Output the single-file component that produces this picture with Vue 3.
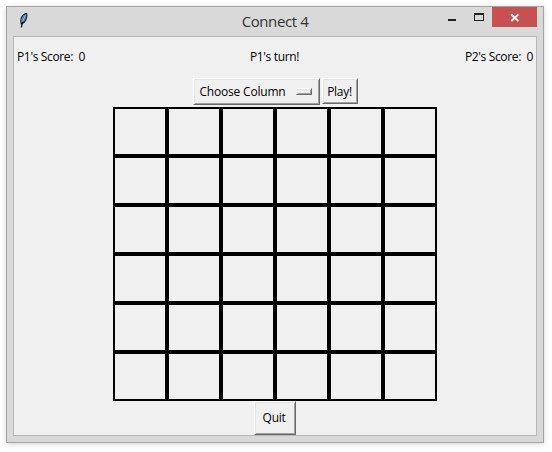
<script setup>
import { ref } from 'vue'

const rows = 6
const columns = 6
const scores = ref({ p1: 0, p2: 0 })
const turn = ref('P1')
const cells = Array.from({ length: rows * columns }, (_, i) => i)
</script>

<template>
  <main class="desktop">
    <section class="window">
      <header class="titlebar">
        <svg class="feather" width="10" height="17" viewBox="0 0 10 17">
          <path d="M2 12.5C.6 9 1.2 4.5 4.2 2.2 5.8 1 7.5.6 8.2 1.2 9 3.8 8 8.4 5.8 10.6 4.8 11.8 3.6 12.4 2 12.5Z" fill="#1c222c" />
          <path d="M2.2 10.5C2 7.5 3 4.5 5 3L4.6 7 2.8 11Z" fill="#6f8fa8" />
          <path d="M5.4 3 7.4 2C7.7 5 6.6 8.2 4 10.6Z" fill="#4380d3" />
          <path d="M6.5 2.8 3.6 9.5" stroke="#a9cdf0" stroke-width=".8" />
          <path d="M3.3 10 2.4 15.5" stroke="#000" stroke-width="1.3" />
        </svg>
        <h1 class="title">Connect 4</h1>
        <div class="controls">
          <svg width="85" height="20" viewBox="0 0 85 20" shape-rendering="crispEdges">
            <rect x="41" width="45" height="20" fill="#c75050" />
            <rect x="-3" y="12" width="8" height="2" fill="#222" />
            <path d="M23 6h10v8H23z M24 8v5h8V8z" fill="#222" fill-rule="evenodd" />
            <path d="M60.3 7.5l7 6.5M67.3 7.5l-7 6.5" stroke="#fff" stroke-width="1.8" shape-rendering="auto" />
          </svg>
        </div>
      </header>

      <div class="client">
        <div class="status">
          <span class="score">P1's Score:&nbsp; {{ scores.p1 }}</span>
          <span class="turn">{{ turn }}'s turn!</span>
          <span class="score">P2's Score:&nbsp; {{ scores.p2 }}</span>
        </div>
        <div class="actions">
          <button class="button chooser"><span>Choose Column</span><i class="indicator"></i></button>
          <button class="button play">Play!</button>
        </div>
        <div class="board">
          <div v-for="cell in cells" :key="cell" class="cell"></div>
        </div>
        <button class="button quit">Quit</button>
      </div>
    </section>
  </main>
</template>

<style>
body {
  background: #fff;
}
</style>

<style scoped>
* {
  box-sizing: border-box;
}
.desktop {
  width: 552px;
  height: 452px;
  padding: 6px;
  overflow: hidden;
  font-family: "Open Sans", "Noto Sans", sans-serif;
  font-size: 12px;
  color: #000;
}
.window {
  width: 538px;
  height: 437px;
  padding: 0 6px;
  border: 1px solid #a3a3a3;
  background: #d9d9d9;
  box-shadow: 0 1px 6px rgba(0, 0, 0, 0.17);
}
.titlebar {
  display: grid;
  grid-template-columns: 85px 1fr 85px;
  height: 29px;
}
.feather {
  margin: 5px 0 0 6px;
}
.title {
  margin: 0;
  text-align: center;
  font-size: 15px;
  font-weight: 400;
  line-height: 28px;
  color: #333;
  letter-spacing: -0.4px;
}
.controls svg {
  display: block;
  margin-left: -1px;
  overflow: visible;
}
.client {
  display: flex;
  flex-direction: column;
  align-items: center;
  height: 400px;
  border: 1px solid #b7b7b7;
  background: #f0f0f0;
}
.status {
  display: grid;
  grid-template-columns: 1fr auto 1fr;
  width: 100%;
  height: 41px;
  padding: 0 3px;
  line-height: 40px;
  letter-spacing: -0.35px;
}
.turn {
  padding-right: 1px;
}
.score:last-child {
  text-align: right;
}
.actions {
  display: flex;
  align-items: flex-start;
  gap: 2px;
  height: 29px;
}
.button {
  display: flex;
  align-items: center;
  justify-content: center;
  flex: none;
  margin: 0;
  padding: 0;
  border: 1px solid;
  border-color: #fff #696969 #696969 #fff;
  box-shadow: inset 1px 1px #e3e3e3, inset -1px -1px #a0a0a0;
  background: #f0f0f0;
  font: inherit;
  color: #000;
  letter-spacing: -0.3px;
}
.chooser {
  justify-content: space-between;
  width: 127px;
  height: 27px;
  padding: 0 7px 1px 6px;
  letter-spacing: -0.2px;
}
.indicator {
  width: 16px;
  height: 7px;
  border: 1px solid;
  border-color: #fff #696969 #696969 #fff;
  box-shadow: inset 1px 1px #e3e3e3, inset -1px -1px #a0a0a0;
}
.play {
  width: 36px;
  height: 26px;
}
.board {
  display: grid;
  grid-template-columns: repeat(6, 54px);
  grid-auto-rows: 49px;
}
.cell {
  border: 2px solid #000;
}
.quit {
  width: 42px;
  height: 34px;
  padding: 0 2px 1px 0;
}
</style>
